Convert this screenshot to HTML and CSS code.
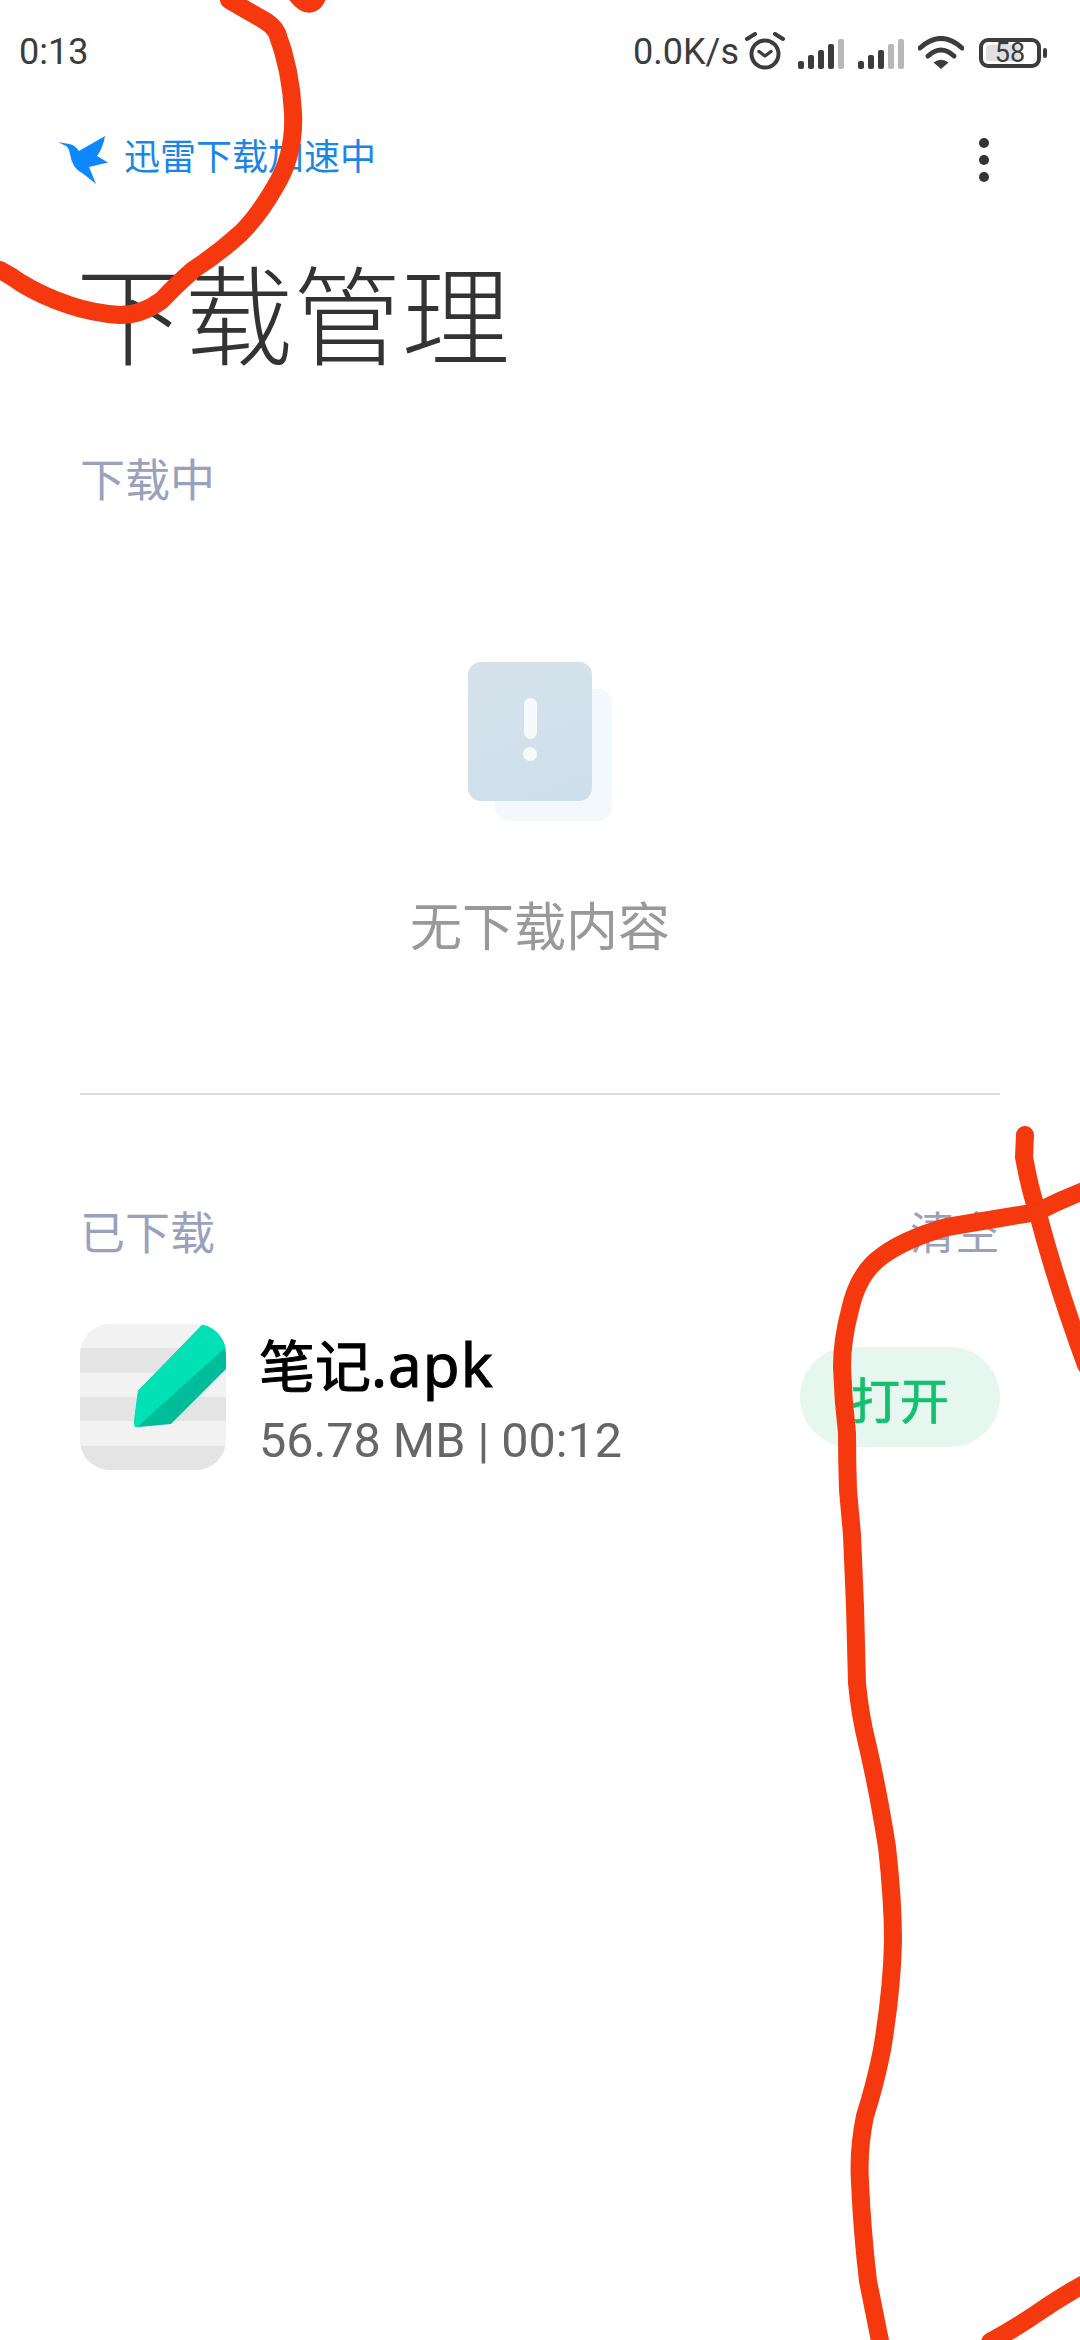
FILE: index.html
```html
<!DOCTYPE html>
<html lang="zh-CN">
<head>
<meta charset="utf-8">
<title>下载管理</title>
<link rel="stylesheet" href="styles.css">
</head>
<body>
<div class="screen">
  <div class="status">
    <span class="time">0:13</span>
    <div class="status-right">
      <span class="speed">0.0K/s</span>
      <svg class="ic-alarm" viewBox="0 0 40 38" width="40" height="38"><circle cx="20" cy="22" r="13.5" fill="none" stroke="#3c3c3c" stroke-width="4"/><path d="M14 19.5l6 4.5 6-4.5" fill="none" stroke="#3c3c3c" stroke-width="3.4" stroke-linecap="round" stroke-linejoin="round"/><path d="M2 7l8-5M38 7l-8-5" fill="none" stroke="#3c3c3c" stroke-width="4" stroke-linecap="round"/></svg>
      <svg class="ic-signal" viewBox="0 0 48 32" width="48" height="32"><rect x="1" y="23" width="6" height="8" rx="2" fill="#3c3c3c"/><rect x="11" y="17" width="6" height="14" rx="2" fill="#3c3c3c"/><rect x="21" y="12" width="6" height="19" rx="2" fill="#3c3c3c"/><rect x="31" y="6" width="6" height="25" rx="2" fill="#3c3c3c"/><rect x="41" y="1" width="6" height="30" rx="2" fill="#b8b8b8"/></svg>
      <svg class="ic-signal" viewBox="0 0 48 32" width="48" height="32"><rect x="1" y="23" width="6" height="8" rx="2" fill="#3c3c3c"/><rect x="11" y="17" width="6" height="14" rx="2" fill="#3c3c3c"/><rect x="21" y="12" width="6" height="19" rx="2" fill="#3c3c3c"/><rect x="31" y="6" width="6" height="25" rx="2" fill="#b8b8b8"/><rect x="41" y="1" width="6" height="30" rx="2" fill="#b8b8b8"/></svg>
      <svg class="ic-wifi" viewBox="0 0 46 33" width="46" height="33"><path d="M2 12Q23-7 44 12" fill="none" stroke="#3c3c3c" stroke-width="5" stroke-linecap="round"/><path d="M10 20Q23 8 36 20" fill="none" stroke="#3c3c3c" stroke-width="5" stroke-linecap="round"/><path d="M15.500 26.500Q23 21 30.500 26.500L23 33Z" fill="#3c3c3c"/></svg>
      <div class="battery"><div class="battery-body"><span class="battery-fill" style="width:34px"></span><span class="battery-num">58</span></div><span class="battery-nub"></span></div>
    </div>
  </div>

  <div class="topbar">
    <div class="promo">
      <svg class="ic-bird" viewBox="0 0 50 52" width="50" height="52"><path d="M0 8L11 10Q17 11 21 17L47 2Q45 14 39 22L50 28.500L31 33L38 50Q31 44 24 39Q14 34 12 20Q11 14 8 12Z" fill="#0f87ff"/></svg>
      <span class="promo-text">迅雷下载加速中</span>
    </div>
    <div class="more"><i></i><i></i><i></i></div>
  </div>

  <h1 class="title">下载管理</h1>

  <div class="section-head first"><span>下载中</span></div>

  <div class="empty">
    <div class="empty-art">
      <div class="sheet-back"></div>
      <div class="sheet-front"><span class="bang-bar"></span><span class="bang-dot"></span></div>
    </div>
    <p class="empty-text">无下载内容</p>
  </div>

  <div class="divider"></div>

  <div class="section-head"><span>已下载</span><span>清空</span></div>

  <div class="item">
    <svg class="app-icon" viewBox="0 0 146 146" width="146" height="146">
      <defs><clipPath id="appclip"><rect width="146" height="146" rx="30"/></clipPath></defs>
      <g clip-path="url(#appclip)">
        <rect width="146" height="146" fill="#f2f2f2"/>
        <rect y="24" width="146" height="25" fill="#e4e4e4"/>
        <rect y="73" width="146" height="24" fill="#e4e4e4"/>
        <rect y="122" width="146" height="24" fill="#e4e4e4"/>
        <path d="M123 0L58 67L54 98Q54 103 59 103L91 100L146 45V0Z" fill="#00bd9a"/>
        <path d="M123 0L58 67L54 98Q54 102 56 104L146 23V0Z" fill="#00e2b6"/>
      </g>
    </svg>
    <div class="item-info">
      <span class="item-name">笔记<span class="item-ext">.apk</span></span>
      <span class="item-meta">56.78 MB | 00:12</span>
    </div>
    <span class="open-btn">打开</span>
  </div>

  <svg class="scribble" viewBox="0 0 1080 2340" width="1080" height="2340">
    <path d="M229 0L262 19Q273 25 277 33Q291 70 293 113Q295 155 275 187Q259 215 241 233Q218 254 193 270Q174 287 162 300Q142 315 120 315Q92 313 69 305Q42 296 21 283Q10 275 0 270"/>
    <path d="M296 -6Q305 6 312 3Q316 1 318 -6"/>
    <path d="M1025 1135L1024 1157Q1030 1190 1037 1210Q1055 1280 1086 1365"/>
    <path d="M1086 1190Q1060 1200 1037 1212Q990 1220 947 1227Q905 1239 882 1256Q858 1273 850 1310Q842 1340 842 1367Q843 1400 847 1433Q847 1460 848 1490L852 1535L855 1606L857 1683Q860 1715 867 1743Q878 1790 887 1847Q893 1900 893 1941Q892 1990 882 2050Q875 2085 865 2116Q858 2150 860 2182Q862 2230 868 2281L881 2346"/>
    <path d="M1086 2283Q1060 2297 1033 2316Q1012 2330 990 2342"/>
  </svg>
</div>
</body>
</html>
```

FILE: styles.css
```css
* { box-sizing: border-box; }
html, body { margin: 0; padding: 0; background: #fff; }
body { font-family: Roboto, "Noto Sans CJK SC", sans-serif; }
.screen { position: relative; width: 1080px; height: 2340px; overflow: hidden; background: #fff; }

.status { display: flex; align-items: center; justify-content: space-between; height: 104px; padding: 0 33px 0 19px; color: #3c3c3c; }
.time { font-size: 36px; line-height: 104px; }
.status-right { display: flex; align-items: center; }
.speed { font-size: 36px; margin-right: 6px; }
.ic-alarm { margin-right: 12px; margin-top: -2px; }
.ic-signal { margin-right: 12px; margin-top: 4px; }
.ic-wifi { margin-left: 1px; margin-right: 15px; margin-top: 1px; }
.battery { display: flex; align-items: center; gap: 2px; margin-top: 1px; }
.battery-body { position: relative; width: 62px; height: 30px; border: 4px solid #3c3c3c; border-radius: 9px; display: flex; align-items: center; justify-content: center; }
.battery-fill { position: absolute; left: 3px; top: 3px; bottom: 3px; background: #e0e0e0; border-radius: 3px; }
.battery-num { position: relative; font-size: 27px; line-height: 22px; color: #3c3c3c; }
.battery-nub { width: 4px; height: 10px; border-radius: 2px; background: #3c3c3c; }

.topbar { display: flex; align-items: center; justify-content: space-between; height: 112px; padding: 0 91px 0 58px; }
.promo { display: flex; align-items: center; gap: 16px; }
.ic-bird { flex: none; }
.promo-text { font-size: 36px; line-height: 50px; margin-bottom: 12px; color: #1c86e4; font-family: "Noto Sans CJK SC", sans-serif; }
.more { display: flex; flex-direction: column; gap: 7px; }
.more i { display: block; width: 10px; height: 10px; border-radius: 50%; background: #333; }

.title { margin: 39px 0 0; padding-left: 76px; font-size: 108.500px; line-height: 110px; font-weight: 300; color: #333; font-family: "Noto Sans CJK SC", sans-serif; }

.section-head { display: flex; justify-content: space-between; padding: 0 80px; font-size: 45px; line-height: 60px; color: #9aa1bd; font-family: "Noto Sans CJK SC", sans-serif; }
.section-head.first { margin-top: 83px; }

.empty { display: flex; flex-direction: column; align-items: center; margin-top: 154px; }
.empty-art { position: relative; width: 144px; height: 159px; }
.sheet-back { position: absolute; left: 27px; top: 27px; width: 117px; height: 132px; border-radius: 14px; background: #f3f8fc; }
.sheet-front { position: absolute; left: 0; top: 0; width: 124px; height: 139px; border-radius: 13px; background: linear-gradient(160deg, #d6e2ea, #cddfec); display: flex; flex-direction: column; align-items: center; padding-top: 36px; }
.bang-bar { width: 13px; height: 41px; border-radius: 7px; background: #f7fafc; }
.bang-dot { width: 14px; height: 14px; margin-top: 8px; border-radius: 50%; background: #f7fafc; }
.empty-text { margin: 67px 0 0; font-size: 52px; line-height: 72px; color: #999; font-family: "Noto Sans CJK SC", sans-serif; }

.divider { height: 2px; margin: 133px 80px 0; background: #dcdcdc; }

.divider + .section-head { margin-top: 106px; }

.item { display: flex; align-items: center; margin-top: 61px; padding: 0 80px; }
.app-icon { flex: none; }
.item-info { display: flex; flex-direction: column; gap: 9px; margin-left: 33px; padding-top: 9px; flex: 1; }
.item-name { font-size: 56px; line-height: 66px; color: #000; -webkit-text-stroke: 1px #000; }
.item-ext { font-family: "Noto Sans", sans-serif; font-size: 60px; letter-spacing: 1px; }
.item-meta { font-size: 48.500px; line-height: 62px; color: #666; }
.open-btn { display: flex; align-items: center; justify-content: center; width: 200px; height: 100px; border-radius: 50px; background: #e5f7ee; color: #12c06e; font-size: 49px; -webkit-text-stroke: 0.7px #12c06e; font-family: "Noto Sans CJK SC", sans-serif; }

.scribble { position: absolute; left: 0; top: 0; pointer-events: none; }
.scribble path { fill: none; stroke: #f6380f; stroke-width: 18; stroke-linecap: round; stroke-linejoin: round; }
```
